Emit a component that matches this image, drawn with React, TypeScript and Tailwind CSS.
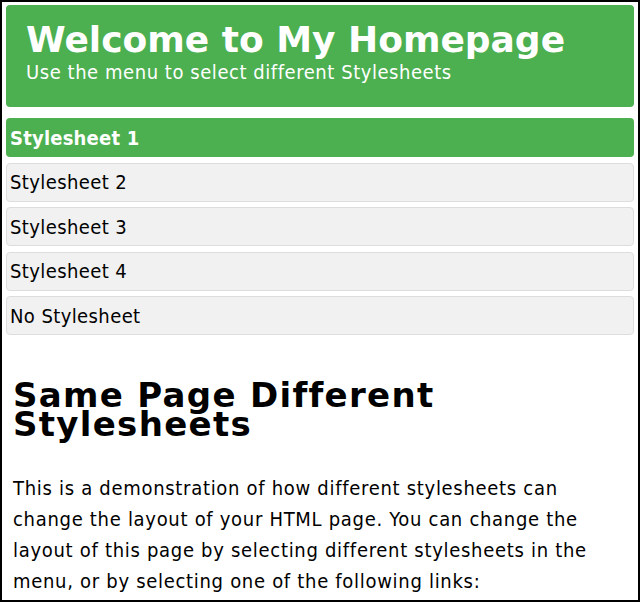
import React from 'react';

const menu = [
  { label: 'Stylesheet 1', active: true },
  { label: 'Stylesheet 2', active: false },
  { label: 'Stylesheet 3', active: false },
  { label: 'Stylesheet 4', active: false },
  { label: 'No Stylesheet', active: false },
];

export default function App() {
  return (
    <div className="w-[640px] h-[602px] overflow-hidden border-2 border-black bg-white text-black font-['DejaVu_Sans',sans-serif]">
      {/* Header */}
      <div className="mx-[4px] mt-[3px] h-[102px] rounded-[4px] bg-[#4caf50] pl-[20px] pt-[17px] text-white">
        <h1 className="text-[36px] font-bold leading-none">Welcome to My Homepage</h1>
        <p className="mt-[4px] text-[20px] leading-none font-stretch-condensed tracking-[0.55px]">
          Use the menu to select different Stylesheets
        </p>
      </div>

      {/* Menu */}
      <div className="mx-[4px] mt-[11px] flex flex-col gap-[5.5px]">
        {menu.map((m) => (
          <div
            key={m.label}
            className={`h-[39px] rounded-[4px] flex items-center text-[20px] leading-none font-stretch-condensed ${
              m.active
                ? 'bg-[#4caf50] px-[4px] text-white font-bold tracking-[0.2px]'
                : 'bg-[#f1f1f1] px-[3px] border border-[#dddddd] text-black tracking-[0.4px]'
            }`}
          >
            {m.label}
          </div>
        ))}
      </div>

      {/* Content */}
      <div className="pl-[11px] pt-[46px]">
        <h1 className="w-[600px] text-[34px] font-bold leading-[29px] tracking-[1.3px]">
          Same Page Different Stylesheets
        </h1>
        <p className="mt-[34px] w-[600px] text-[20px] leading-[31px] font-stretch-condensed tracking-[0.7px]">
          This is a demonstration of how different stylesheets can change the layout of your HTML page. You can change the layout of this page by selecting different stylesheets in the menu, or by selecting one of the following links:
        </p>
      </div>
    </div>
  );
}
